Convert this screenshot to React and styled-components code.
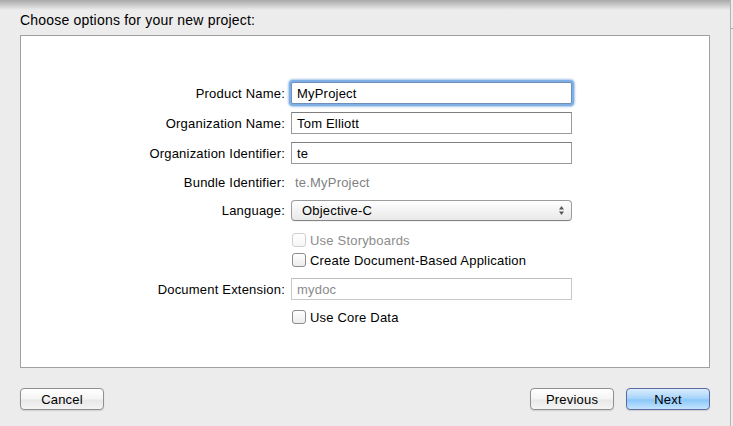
import React from 'react'
import styled, { createGlobalStyle } from 'styled-components'

const GlobalStyle = createGlobalStyle`
html, body {
  margin: 0;
  padding: 0;
  background: #ececec;
}
body {
  font-family: "Liberation Sans", Arial, sans-serif;
  font-size: 13px;
  color: #000;
}
`

const Page = styled.div`
width: 733px;
height: 426px;
display: flex;
background: #ececec;
overflow: hidden;
`
const Sheet = styled.div`
position: relative;
width: 690px;
padding: 0 20px;
border-right: 1px solid #b4b4b4;
display: flex;
flex-direction: column;
`
const TopShadow = styled.div`
position: absolute;
left: 0;
right: 0;
top: 0;
height: 10px;
background: linear-gradient(#a9a9a9, rgba(236, 236, 236, 0));
pointer-events: none;
`
const Strip = styled.div`
flex: 1;
background: #eaeaea;
display: flex;
flex-direction: column;
`
const StripTick = styled.div`
margin-top: 28px;
height: 1px;
background: #a8a8a8;
`
const Title = styled.div`
padding-top: 11px;
height: 24px;
line-height: 18px;
font-size: 14px;
letter-spacing: 0.2px;
`
const Panel = styled.div`
height: 331px;
background: #fff;
border: 1px solid #a0a0a0;
`
const Form = styled.div`
display: grid;
grid-template-columns: 264px 281px;
column-gap: 6px;
padding-top: 46px;
letter-spacing: 0.2px;
`
const Label = styled.div`
display: flex;
align-items: center;
justify-content: flex-end;
height: ${p => p.h || 22}px;
margin-top: ${p => p.mt || 0}px;
`
const Cell = styled.div`
display: flex;
align-items: center;
height: ${p => p.h || 22}px;
margin-top: ${p => p.mt || 0}px;
`
const TextField = styled.div`
box-sizing: border-box;
width: 100%;
height: 22px;
display: flex;
align-items: center;
padding-left: 5px;
background: #fff;
border: 1px solid ${p => (p.disabled ? '#c9c9c9' : '#9a9a9a')};
border-top-color: ${p => (p.disabled ? '#bdbdbd' : '#7e7e7e')};
color: ${p => (p.disabled ? '#8a8a8a' : '#000')};
${p => p.focused && `
  border-color: #6f8fb8;
  border-radius: 2px;
  box-shadow: 0 0 0 2px #7eb0e6, 0 0 2px 3px rgba(110, 160, 220, 0.6);
`}
`
const Value = styled.span`
padding-left: 4px;
color: #7f7f7f;
`
const Popup = styled.div`
box-sizing: border-box;
width: 100%;
height: 21px;
display: flex;
align-items: center;
justify-content: space-between;
padding: 0 6px 0 10px;
border: 1px solid #9c9c9c;
border-bottom-color: #848484;
border-radius: 4px;
background: linear-gradient(#ffffff, #f3f3f3 50%, #e9e9e9);
box-shadow: 0 1px 0 rgba(0, 0, 0, 0.05);
`
const Check = styled.label`
display: flex;
align-items: center;
gap: 4px;
color: ${p => (p.disabled ? '#8c8c8c' : '#000')};
`
const Box = styled.span`
box-sizing: border-box;
width: 14px;
height: 14px;
margin-left: 1px;
border-radius: 3px;
border: 1px solid ${p => (p.disabled ? '#cfcfcf' : '#8d8d8d')};
background: linear-gradient(#ffffff, ${p => (p.disabled ? '#f6f6f6' : '#ececec')});
`
const Footer = styled.div`
display: flex;
align-items: flex-start;
padding-top: 20px;
`
const Spacer = styled.div`
flex: 1;
`
const Button = styled.button`
box-sizing: border-box;
width: 84px;
height: 22px;
margin-left: ${p => p.ml || 0}px;
padding: 0;
font-family: inherit;
font-size: 13px;
letter-spacing: 0.2px;
color: #000;
border-radius: 4px;
border: 1px solid ${p => (p.primary ? '#5e68a2' : '#8f8f8f')};
background: ${p => p.primary
  ? 'linear-gradient(#d9ecfd, #aad5fb 45%, #8ac7f8 55%, #c4e5fe)'
  : 'linear-gradient(#ffffff, #f4f4f4 50%, #e8e8e8 55%, #f4f4f4)'};
box-shadow: 0 1px 1px rgba(0, 0, 0, 0.12);
cursor: pointer;
`

const Arrows = () => (
  <svg width="7" height="11" viewBox="0 0 7 11">
    <path d="M3.5 1 L6 4.5 L1 4.5 Z" fill="#555" />
    <path d="M3.5 10 L6 6.5 L1 6.5 Z" fill="#555" />
  </svg>
)

const App = () => {
  return (
    <Page>
      <GlobalStyle />
      <Sheet>
        <TopShadow />
        <Title>Choose options for your new project:</Title>
        <Panel>
          <Form>
            <Label>Product Name:</Label>
            <Cell><TextField focused>MyProject</TextField></Cell>

            <Label mt={8}>Organization Name:</Label>
            <Cell mt={8}><TextField>Tom Elliott</TextField></Cell>

            <Label mt={8}>Organization Identifier:</Label>
            <Cell mt={8}><TextField>te</TextField></Cell>

            <Label mt={7}>Bundle Identifier:</Label>
            <Cell mt={7}><Value>te.MyProject</Value></Cell>

            <Label mt={7} h={21}>Language:</Label>
            <Cell mt={7} h={21}><Popup>Objective-C<Arrows /></Popup></Cell>

            <Label mt={10} h={18} />
            <Cell mt={10} h={18}><Check disabled><Box disabled />Use Storyboards</Check></Cell>

            <Label mt={2} h={18} />
            <Cell mt={2} h={18}><Check><Box />Create Document-Based Application</Check></Cell>

            <Label mt={9}>Document Extension:</Label>
            <Cell mt={9}><TextField disabled>mydoc</TextField></Cell>

            <Label mt={8} h={18} />
            <Cell mt={8} h={18}><Check><Box />Use Core Data</Check></Cell>
          </Form>
        </Panel>
        <Footer>
          <Button>Cancel</Button>
          <Spacer />
          <Button>Previous</Button>
          <Button primary ml={12}>Next</Button>
        </Footer>
      </Sheet>
      <Strip>
        <StripTick />
      </Strip>
    </Page>
  )
}
export default App
